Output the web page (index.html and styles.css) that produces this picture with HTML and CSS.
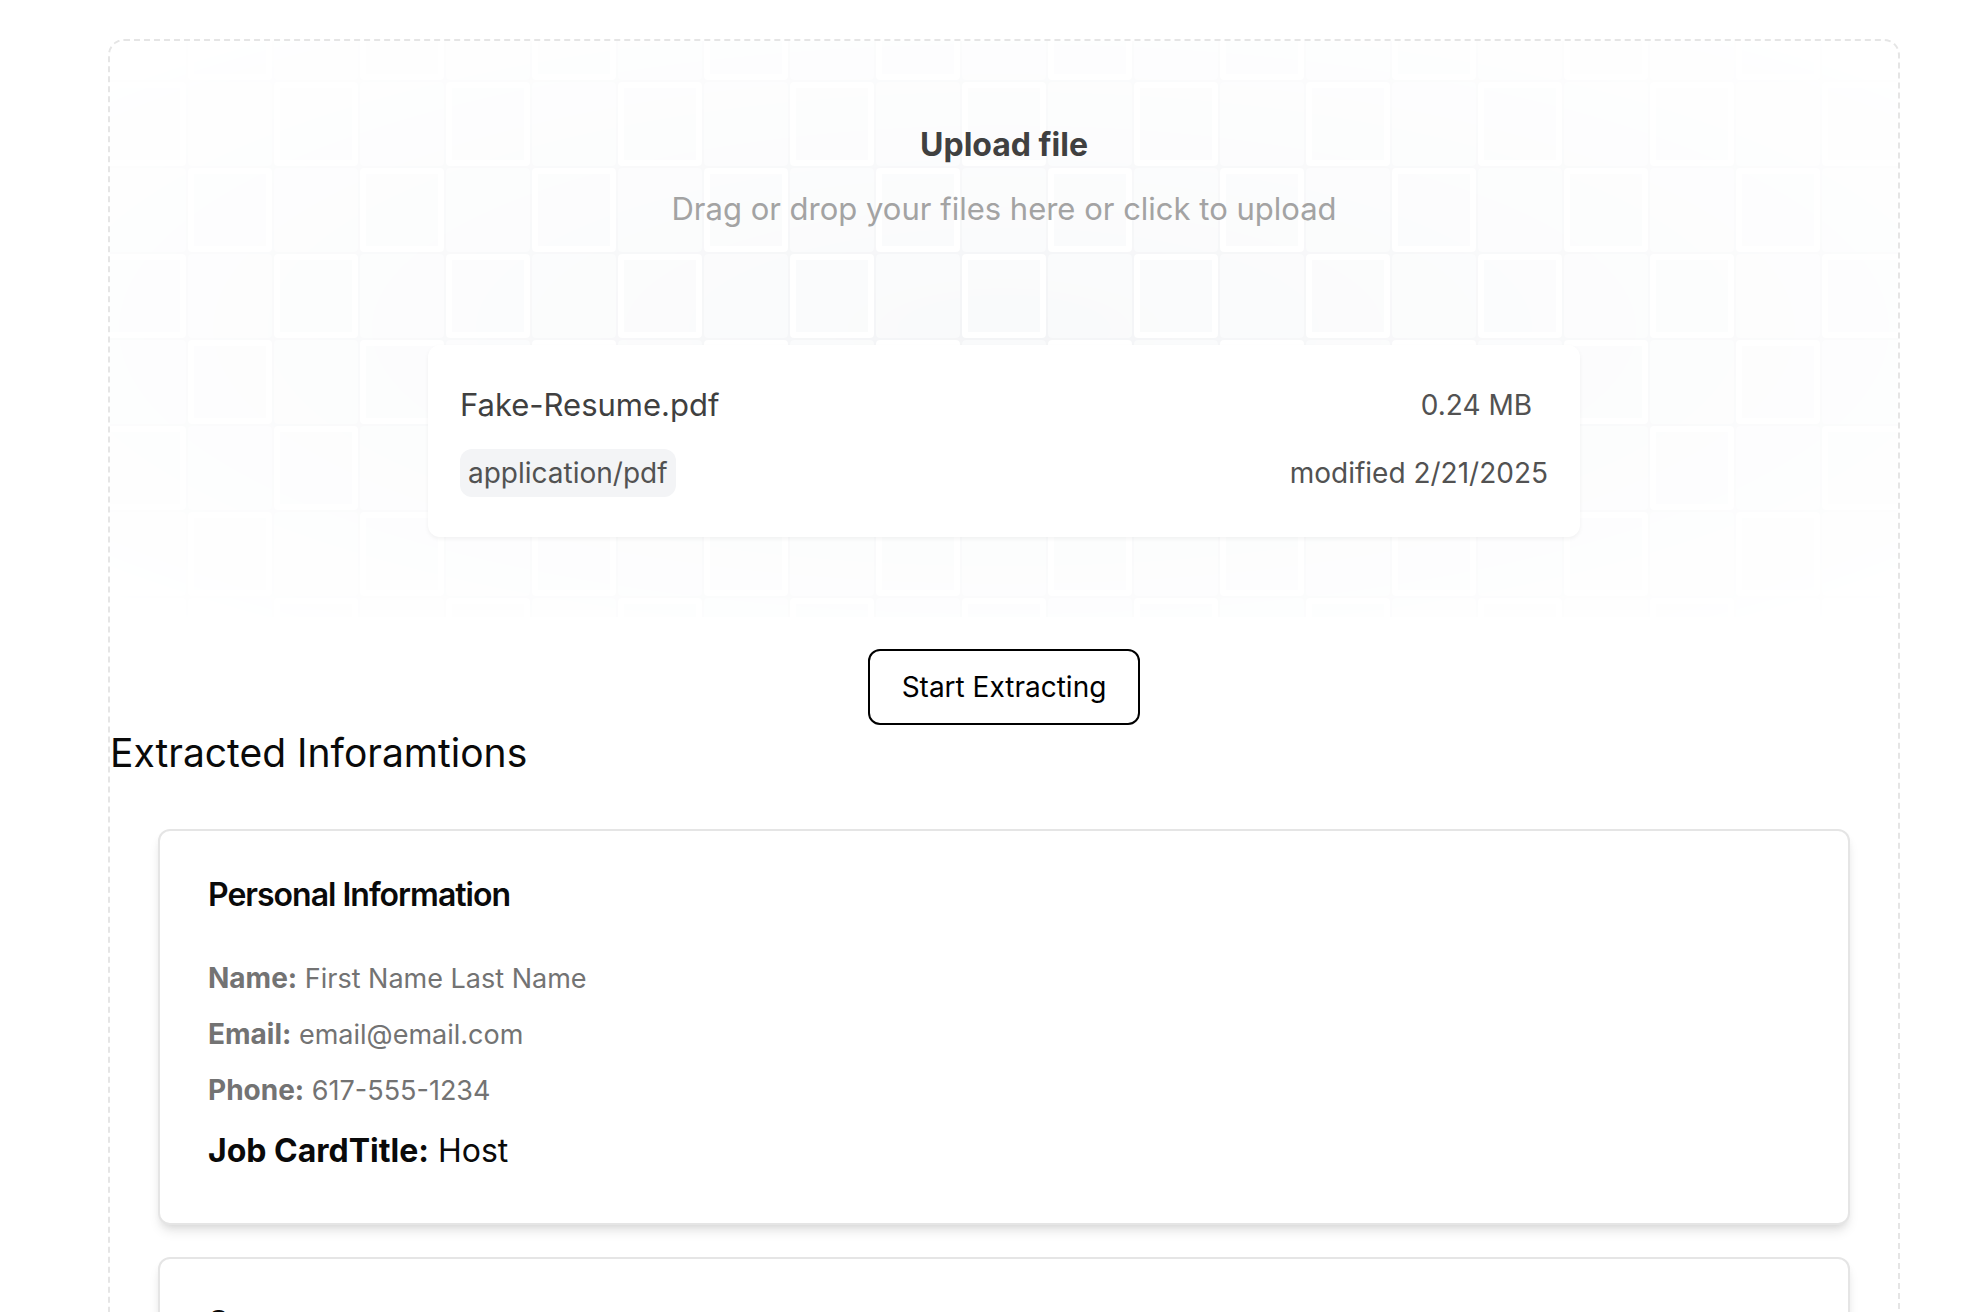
FILE: index.html
```html
<!DOCTYPE html>
<html lang="en">
<head>
<meta charset="utf-8">
<meta name="viewport" content="width=device-width, initial-scale=1">
<title>Resume extraction</title>
<link rel="stylesheet" href="styles.css">
</head>
<body>
<main class="frame">
  <section class="upload">
    <svg class="upload-grid" aria-hidden="true">
      <defs>
        <pattern id="checks" patternUnits="userSpaceOnUse" x="-43" y="40" width="172" height="172">
          <rect width="172" height="172" fill="#f3f4f6"/>
          <rect x="1" y="1" width="84" height="84" rx="4" fill="#fff"/>
          <rect x="7" y="7" width="72" height="72" fill="#f9fafb"/>
          <rect x="87" y="1" width="84" height="84" rx="4" fill="#f9fafb"/>
          <rect x="1" y="87" width="84" height="84" rx="4" fill="#f9fafb"/>
          <rect x="87" y="87" width="84" height="84" rx="4" fill="#fff"/>
          <rect x="93" y="93" width="72" height="72" fill="#f9fafb"/>
        </pattern>
      </defs>
      <svg x="50%" overflow="visible">
        <rect x="-2000" width="4000" height="1200" fill="url(#checks)"/>
      </svg>
    </svg>
    <label class="upload-label" for="resume">
      <span class="upload-title">Upload file</span>
      <span class="upload-hint">Drag or drop your files here or click to upload</span>
    </label>
    <input class="upload-input" id="resume" type="file">
    <div class="file">
      <div class="file-row">
        <span class="file-name">Fake-Resume.pdf</span>
        <span class="file-size">0.24 MB</span>
      </div>
      <div class="file-row">
        <span class="file-type">application/pdf</span>
        <span class="file-date">modified 2/21/2025</span>
      </div>
    </div>
  </section>
  <button class="start" type="button">Start Extracting</button>
  <h1 class="heading">Extracted Inforamtions</h1>
  <div class="cards">
    <section class="card">
      <h2 class="card-title">Personal Information</h2>
      <p class="detail"><strong>Name:</strong> First Name Last Name</p>
      <p class="detail"><strong>Email:</strong> email@email.com</p>
      <p class="detail"><strong>Phone:</strong> 617-555-1234</p>
      <p class="job"><strong>Job CardTitle:</strong> Host</p>
    </section>
    <section class="card">
      <h2 class="card-title">Summary</h2>
    </section>
  </div>
</main>
</body>
</html>
```
FILE: styles.css
```css
* {
  box-sizing: border-box;
}

body {
  height: 100vh;
  margin: 0;
  overflow: hidden;
  background: #fff;
  color: #0a0a0a;
  font-family: Inter, "Liberation Sans", sans-serif;
  font-size: 28px;
  line-height: 40px;
}

h1,
h2,
p {
  margin: 0;
}

.frame {
  display: flex;
  flex-direction: column;
  margin: 39px 66px 0 108px;
  border: 2px dashed #e5e5e5;
  border-radius: 16px;
}

.upload {
  position: relative;
  display: flex;
  flex-direction: column;
  align-items: center;
  gap: 112px;
  padding: 80px;
  overflow: hidden;
}

.upload-grid {
  position: absolute;
  inset: 0;
  width: 100%;
  height: 100%;
  -webkit-mask-image: radial-gradient(ellipse at center, #fff, transparent);
  mask-image: radial-gradient(ellipse at center, #fff, transparent);
}

.upload-label {
  position: relative;
  display: flex;
  flex-direction: column;
  align-items: center;
  gap: 16px;
  line-height: 48px;
  cursor: pointer;
}

.upload-title {
  color: #404040;
  font-size: 32px;
  font-weight: 700;
}

.upload-hint {
  color: #a3a3a3;
  font-size: 31px;
}

.upload-input {
  position: absolute;
  width: 1px;
  height: 1px;
  opacity: 0;
}

.file {
  position: relative;
  display: flex;
  flex-direction: column;
  gap: 16px;
  width: 100%;
  max-width: 1152px;
  padding: 32px 32px 40px;
  border-radius: 12px;
  background: #fff;
  box-shadow: 0 2px 4px rgba(0, 0, 0, 0.05);
  color: #525252;
}

.file-row {
  display: flex;
  align-items: center;
  justify-content: space-between;
}

.file-name {
  color: #404040;
  font-size: 31px;
  line-height: 56px;
}

.file-size {
  padding: 8px 16px;
}

.file-type {
  padding: 4px 8px;
  border-radius: 12px;
  background: #f3f4f6;
}

.start {
  align-self: center;
  margin-top: 32px;
  padding: 16px 32px;
  border: 2px solid #000;
  border-radius: 12px;
  background: #fff;
  color: #000;
  font: inherit;
}

.heading {
  font-size: 39px;
  font-weight: 400;
  line-height: 56px;
}

.cards {
  display: flex;
  flex-direction: column;
  gap: 32px;
  padding: 48px;
}

.card {
  display: flex;
  flex-direction: column;
  gap: 16px;
  padding: 48px;
  border: 2px solid #e5e5e5;
  border-radius: 12px;
  background: #fff;
  box-shadow: 0 8px 12px -2px rgba(0, 0, 0, 0.1), 0 4px 8px -4px rgba(0, 0, 0, 0.1);
}

.card-title {
  margin-bottom: 32px;
  font-size: 32px;
  font-weight: 600;
  line-height: 32px;
  letter-spacing: -1px;
}

.detail {
  color: #737373;
  font-size: 27px;
}

.detail strong {
  font-size: 28px;
  line-height: 32px;
}

.job {
  font-size: 32px;
  line-height: 48px;
}
```
